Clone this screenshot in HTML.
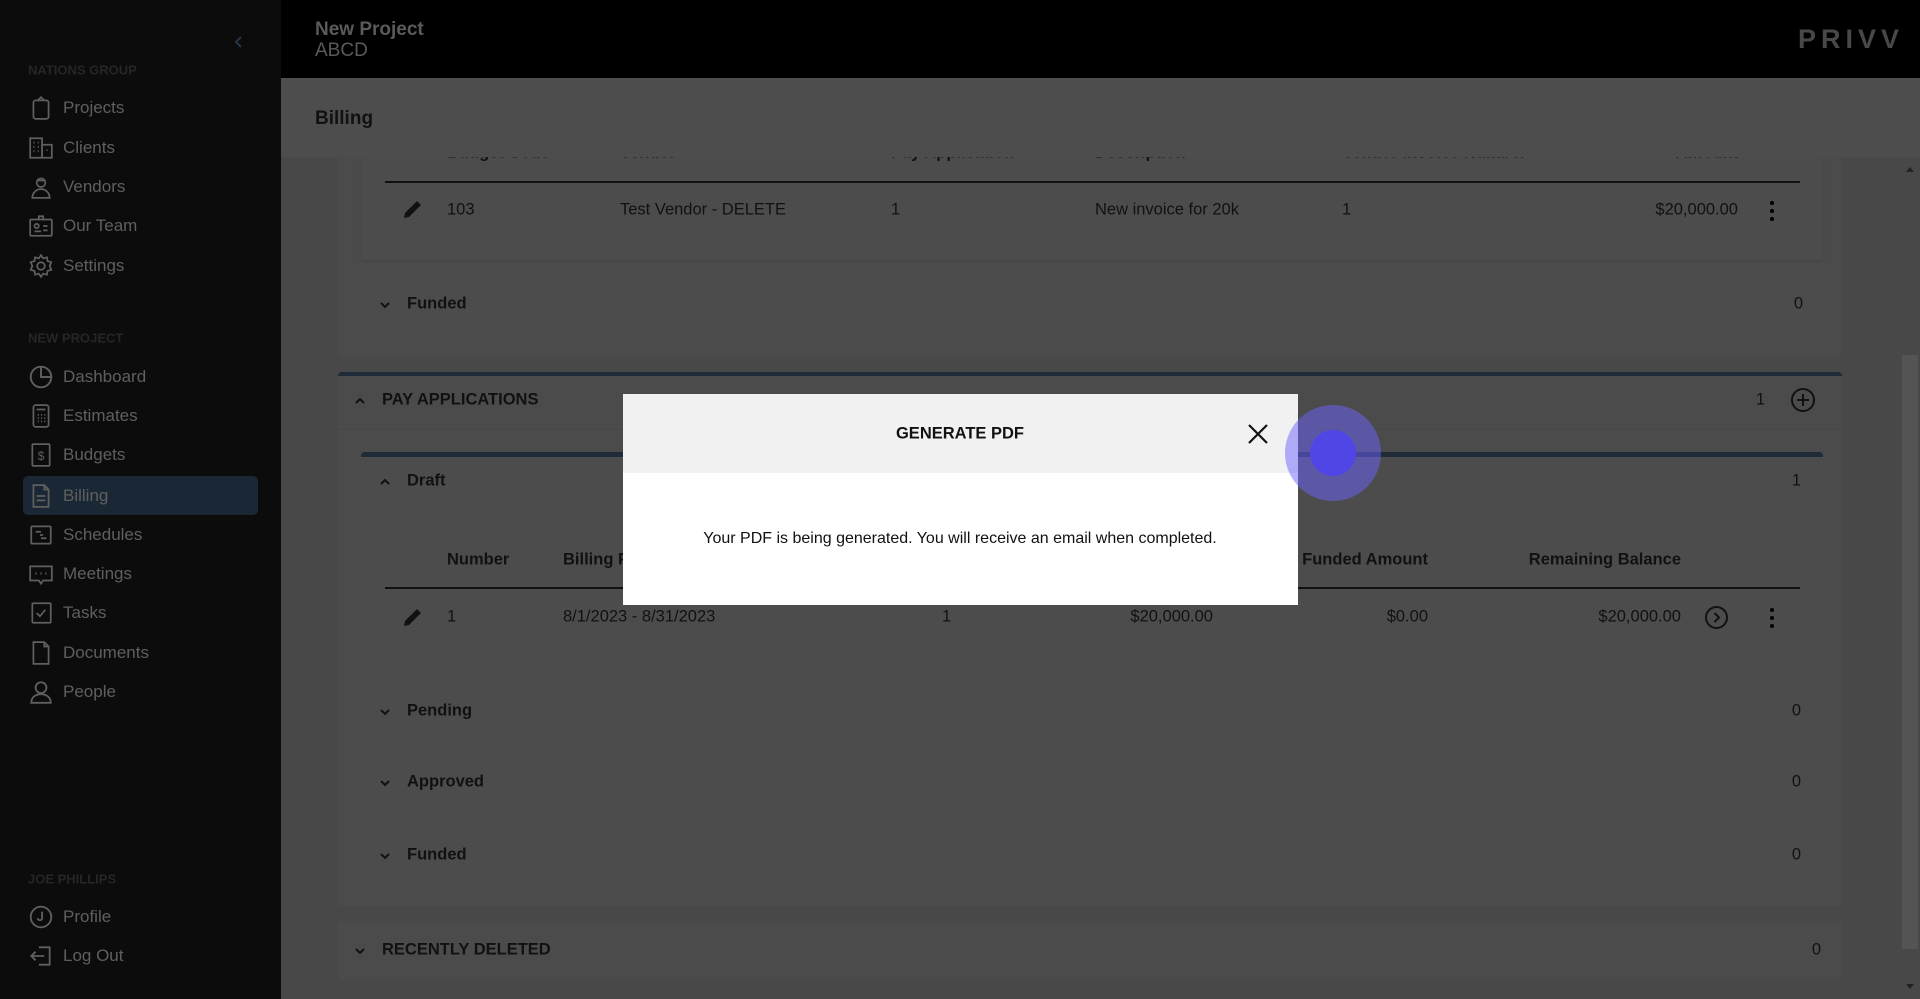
<!DOCTYPE html>
<html><head><meta charset="utf-8"><style>
*{margin:0;padding:0;box-sizing:border-box}
body{width:1920px;height:999px;overflow:hidden;background:#484848;font-family:"Liberation Sans",Arial,sans-serif;position:relative;color:#111}
.a{position:absolute}
.side{left:0;top:0;width:281px;height:999px;background:#0c0c0c}
.grp{left:28px;font-size:13px;font-weight:bold;color:#262626;transform:translateY(-50%)}
.it{left:28px;width:230px;height:38px;display:flex;align-items:center;transform:translateY(-50%);color:#5f5f5f;font-size:17px}
.it svg{width:26px;height:26px;margin-right:9px;flex:none}
.t{transform:translateY(-50%);font-size:16.5px;white-space:nowrap}
.r{transform:translate(-100%,-50%)}
.b{font-weight:bold}
.card{background:#4b4b4b;border-radius:4px}
.chev{width:14px;height:14px;transform:translateY(-50%)}
</style></head><body>
<div class="a side"></div>
<svg class="a" style="left:232px;top:34px" width="14" height="16" viewBox="0 0 14 16"><path d="M9 3L4 8l5 5" stroke="#23354a" stroke-width="2" fill="none"/></svg>
<div class="a grp" style="top:70px">NATIONS GROUP</div>
<div class="a it" style="top:108px"><svg viewBox="0 0 24 24" fill="none" stroke="#5f5f5f" stroke-width="1.6"><rect x="5" y="5" width="14" height="17" rx="2"/><path d="M9 5l3-3 3 3"/></svg>Projects</div>
<div class="a it" style="top:148px"><svg viewBox="0 0 24 24" fill="none" stroke="#5f5f5f" stroke-width="1.6"><rect x="2" y="3" width="11" height="18"/><rect x="13" y="9" width="9" height="12"/><path d="M5 7h1M9 7h1M5 11h1M9 11h1M5 15h1M9 15h1M17 14h1"/></svg>Clients</div>
<div class="a it" style="top:187px"><svg viewBox="0 0 24 24" fill="none" stroke="#5f5f5f" stroke-width="1.6"><circle cx="12" cy="8" r="4"/><path d="M8 6h8M4 22c0-5 4-8 8-8s8 3 8 8z"/></svg>Vendors</div>
<div class="a it" style="top:226px"><svg viewBox="0 0 24 24" fill="none" stroke="#5f5f5f" stroke-width="1.6"><rect x="2" y="6" width="20" height="15" rx="1"/><path d="M10 6V3h4v3M6 17h6M14 12h4M14 16h4"/><circle cx="8" cy="12" r="2"/></svg>Our Team</div>
<div class="a it" style="top:266px"><svg viewBox="0 0 24 24" fill="none" stroke="#5f5f5f" stroke-width="1.6"><circle cx="12" cy="12" r="3.5"/><path d="M12 2l2 3 3.5-1 .5 3.5 3.5 1-1.5 3.5 1.5 3.5-3.5 1-.5 3.5-3.5-1-2 3-2-3-3.5 1-.5-3.5-3.5-1L4 12 2.5 8.5 6 7.5 6.5 4 10 5z"/></svg>Settings</div>
<div class="a grp" style="top:338px">NEW PROJECT</div>
<div class="a" style="left:23px;top:476px;width:235px;height:39px;background:#1a2835;border-radius:5px"></div>
<div class="a it" style="top:377px"><svg viewBox="0 0 24 24" fill="none" stroke="#5f5f5f" stroke-width="1.8"><circle cx="12" cy="12" r="9.5"/><path d="M12 2.5V12h9.5"/></svg>Dashboard</div>
<div class="a it" style="top:416px"><svg viewBox="0 0 24 24" fill="none" stroke="#5f5f5f" stroke-width="1.6"><rect x="5" y="2" width="14" height="20" rx="2"/><path d="M8 6h8M9 11h1M12 11h1M15 11h1M9 14h1M12 14h1M15 14h1M9 17h1M12 17h1M15 17h1"/></svg>Estimates</div>
<div class="a it" style="top:455px"><svg viewBox="0 0 24 24" fill="none" stroke="#5f5f5f" stroke-width="1.6"><rect x="4" y="2" width="16" height="20" rx="1"/><text x="12" y="16.5" font-size="11" text-anchor="middle" fill="#5f5f5f" stroke="none" font-family="Liberation Sans">$</text></svg>Budgets</div>
<div class="a it" style="top:496px"><svg viewBox="0 0 24 24" fill="none" stroke="#5f5f5f" stroke-width="1.6"><path d="M5 2h10l4 4v16H5z M15 2v4h4M8 12h8M8 16h8"/></svg>Billing</div>
<div class="a it" style="top:535px"><svg viewBox="0 0 24 24" fill="none" stroke="#5f5f5f" stroke-width="1.6"><rect x="3" y="4" width="18" height="16" rx="1"/><path d="M7 9h5M11 12h3M12 15h5"/></svg>Schedules</div>
<div class="a it" style="top:574px"><svg viewBox="0 0 24 24" fill="none" stroke="#5f5f5f" stroke-width="1.6"><path d="M2 5h20v13H14l-2 3-2-3H2z"/><path d="M7 11.5h1M11.5 11.5h1M16 11.5h1" stroke-width="2.2"/></svg>Meetings</div>
<div class="a it" style="top:613px"><svg viewBox="0 0 24 24" fill="none" stroke="#5f5f5f" stroke-width="1.6"><rect x="4" y="3" width="17" height="18" rx="1"/><path d="M8 12l3 3 5-6"/></svg>Tasks</div>
<div class="a it" style="top:653px"><svg viewBox="0 0 24 24" fill="none" stroke="#5f5f5f" stroke-width="1.6"><path d="M5 2h10l4 4v16H5z M15 2v4h4"/></svg>Documents</div>
<div class="a it" style="top:692px"><svg viewBox="0 0 24 24" fill="none" stroke="#5f5f5f" stroke-width="1.7"><circle cx="12" cy="8" r="5"/><path d="M3 22c0-5 4-8 9-8s9 3 9 8z"/></svg>People</div>
<div class="a grp" style="top:879px">JOE PHILLIPS</div>
<div class="a it" style="top:917px"><svg viewBox="0 0 24 24" fill="none" stroke="#5f5f5f" stroke-width="1.7"><circle cx="12" cy="12" r="9.5"/><path d="M13 7v6a2 2 0 0 1-4 0"/></svg>Profile</div>
<div class="a it" style="top:956px"><svg viewBox="0 0 24 24" fill="none" stroke="#5f5f5f" stroke-width="1.7"><path d="M10 4h10v16H10M3 12h12M7 8l-4 4 4 4"/></svg>Log Out</div>

<div class="a card" style="left:338px;top:140px;width:1504px;height:217px"></div>
<div class="a card" style="left:361px;top:140px;width:1462px;height:120px;background:#4c4c4c;box-shadow:0 1px 2px #444"></div>
<div class="a t b" style="left:447px;top:153px">Budget Code</div>
<div class="a t b" style="left:620px;top:153px">Vendor</div>
<div class="a t b" style="left:891px;top:153px">Pay Application</div>
<div class="a t b" style="left:1095px;top:153px">Description</div>
<div class="a t b" style="left:1342px;top:153px">Vendor Invoice Number</div>
<div class="a t b r" style="left:1738px;top:153px">Amount</div>
<div class="a" style="left:385px;top:181px;width:1415px;height:2px;background:#111"></div>
<svg class="a" style="left:401px;top:197px" width="24" height="24" viewBox="0 0 24 24"><path d="M3 21l1-5L16 4l4 4L8 20z" fill="#111"/></svg>
<div class="a t" style="left:447px;top:210px">103</div>
<div class="a t" style="left:620px;top:210px">Test Vendor - DELETE</div>
<div class="a t" style="left:891px;top:210px">1</div>
<div class="a t" style="left:1095px;top:210px">New invoice for 20k</div>
<div class="a t" style="left:1342px;top:210px">1</div>
<div class="a t r" style="left:1738px;top:210px">$20,000.00</div>
<svg class="a" style="left:1766px;top:200px" width="12" height="22"><circle cx="6" cy="3" r="2"/><circle cx="6" cy="11" r="2"/><circle cx="6" cy="19" r="2"/></svg>
<div class="a card" style="left:361px;top:274px;width:1462px;height:60px;background:#4c4c4c"></div>
<svg class="a chev" style="left:378px;top:305px" viewBox="0 0 14 14"><path d="M3 5l4 4 4-4" stroke="#111" stroke-width="2" fill="none"/></svg>
<div class="a t b" style="left:407px;top:304px">Funded</div>
<div class="a t r" style="left:1803px;top:304px">0</div>

<div class="a" style="left:281px;top:78px;width:1639px;height:79px;background:#4d4d4d"></div>
<div class="a t b" style="left:315px;top:119px;font-size:19px">Billing</div>
<div class="a" style="left:281px;top:0;width:1639px;height:78px;background:#000"></div>
<div class="a b" style="left:315px;top:19px;font-size:19px;color:#5a5a5a">New Project</div>
<div class="a" style="left:315px;top:40px;font-size:19px;color:#5a5a5a">ABCD</div>
<div class="a b" style="left:1798px;top:24px;font-size:27px;letter-spacing:5px;color:#484848">PRIVV</div>

<div class="a card" style="left:338px;top:372px;width:1504px;height:534px;border-top:4px solid #1f2b38"></div>
<svg class="a chev" style="left:353px;top:401px" viewBox="0 0 14 14"><path d="M3 9l4-4 4 4" stroke="#111" stroke-width="2" fill="none"/></svg>
<div class="a t b" style="left:382px;top:400px">PAY APPLICATIONS</div>
<div class="a t r" style="left:1765px;top:400px">1</div>
<svg class="a" style="left:1790px;top:387px" width="26" height="26" viewBox="0 0 26 26"><circle cx="13" cy="13" r="11" stroke="#111" stroke-width="2" fill="none"/><path d="M13 7v12M7 13h12" stroke="#111" stroke-width="2"/></svg>
<div class="a" style="left:338px;top:429px;width:1504px;height:1px;background:#464646"></div>
<div class="a card" style="left:361px;top:452px;width:1462px;height:218px;border-top:5px solid #1f2b38;background:#4c4c4c"></div>
<svg class="a chev" style="left:378px;top:482px" viewBox="0 0 14 14"><path d="M3 9l4-4 4 4" stroke="#111" stroke-width="2" fill="none"/></svg>
<div class="a t b" style="left:407px;top:481px">Draft</div>
<div class="a t r" style="left:1801px;top:481px">1</div>
<div class="a t b" style="left:447px;top:560px">Number</div>
<div class="a t b" style="left:563px;top:560px">Billing Period</div>
<div class="a t b r" style="left:1428px;top:560px">Funded Amount</div>
<div class="a t b r" style="left:1681px;top:560px">Remaining Balance</div>
<div class="a" style="left:385px;top:587px;width:1415px;height:2px;background:#111"></div>
<svg class="a" style="left:401px;top:605px" width="24" height="24" viewBox="0 0 24 24"><path d="M3 21l1-5L16 4l4 4L8 20z" fill="#111"/></svg>
<div class="a t" style="left:447px;top:617px">1</div>
<div class="a t" style="left:563px;top:617px">8/1/2023 - 8/31/2023</div>
<div class="a t" style="left:942px;top:617px">1</div>
<div class="a t r" style="left:1213px;top:617px">$20,000.00</div>
<div class="a t r" style="left:1428px;top:617px">$0.00</div>
<div class="a t r" style="left:1681px;top:617px">$20,000.00</div>
<svg class="a" style="left:1704px;top:605px" width="25" height="25" viewBox="0 0 25 25"><circle cx="12.5" cy="12.5" r="10.5" stroke="#111" stroke-width="2" fill="none"/><path d="M10.5 8l4.5 4.5-4.5 4.5" stroke="#111" stroke-width="2" fill="none"/></svg>
<svg class="a" style="left:1766px;top:607px" width="12" height="22"><circle cx="6" cy="3" r="2"/><circle cx="6" cy="11" r="2"/><circle cx="6" cy="19" r="2"/></svg>
<div class="a card" style="left:361px;top:682px;width:1462px;height:59px;background:#4c4c4c"></div>
<svg class="a chev" style="left:378px;top:712px" viewBox="0 0 14 14"><path d="M3 5l4 4 4-4" stroke="#111" stroke-width="2" fill="none"/></svg>
<div class="a t b" style="left:407px;top:711px">Pending</div>
<div class="a t r" style="left:1801px;top:711px">0</div>
<div class="a card" style="left:361px;top:753px;width:1462px;height:59px;background:#4c4c4c"></div>
<svg class="a chev" style="left:378px;top:783px" viewBox="0 0 14 14"><path d="M3 5l4 4 4-4" stroke="#111" stroke-width="2" fill="none"/></svg>
<div class="a t b" style="left:407px;top:782px">Approved</div>
<div class="a t r" style="left:1801px;top:782px">0</div>
<div class="a card" style="left:361px;top:824px;width:1462px;height:60px;background:#4c4c4c"></div>
<svg class="a chev" style="left:378px;top:856px" viewBox="0 0 14 14"><path d="M3 5l4 4 4-4" stroke="#111" stroke-width="2" fill="none"/></svg>
<div class="a t b" style="left:407px;top:855px">Funded</div>
<div class="a t r" style="left:1801px;top:855px">0</div>
<div class="a card" style="left:338px;top:921px;width:1504px;height:59px"></div>
<svg class="a chev" style="left:353px;top:951px" viewBox="0 0 14 14"><path d="M3 5l4 4 4-4" stroke="#111" stroke-width="2" fill="none"/></svg>
<div class="a t b" style="left:382px;top:950px">RECENTLY DELETED</div>
<div class="a t r" style="left:1821px;top:950px">0</div>

<div class="a" style="left:1900px;top:157px;width:20px;height:842px;background:#484848"></div>
<div class="a" style="left:1902px;top:355px;width:16px;height:594px;background:#545454"></div>
<svg class="a" style="left:1904px;top:164px" width="12" height="10"><path d="M2 8l4-5 4 5z" fill="#222"/></svg>
<svg class="a" style="left:1904px;top:982px" width="12" height="10"><path d="M2 2l4 5 4-5z" fill="#222"/></svg>

<div class="a" style="left:623px;top:394px;width:675px;height:211px;background:#fff"></div>
<div class="a" style="left:623px;top:394px;width:675px;height:79px;background:#f1f1f1"></div>
<div class="a t b" style="left:960px;top:434px;transform:translate(-50%,-50%)">GENERATE PDF</div>
<svg class="a" style="left:1247px;top:423px" width="22" height="22"><path d="M2 2l18 18M20 2L2 20" stroke="#111" stroke-width="2.2"/></svg>
<div class="a t" style="left:960px;top:539px;transform:translate(-50%,-50%);font-size:16px">Your PDF is being generated. You will receive an email when completed.</div>
<div class="a" style="left:1285px;top:405px;width:96px;height:96px;border-radius:50%;background:rgba(110,100,255,0.5)"></div>
<div class="a" style="left:1310px;top:430px;width:46px;height:46px;border-radius:50%;background:#5046e6"></div>
</body></html>
